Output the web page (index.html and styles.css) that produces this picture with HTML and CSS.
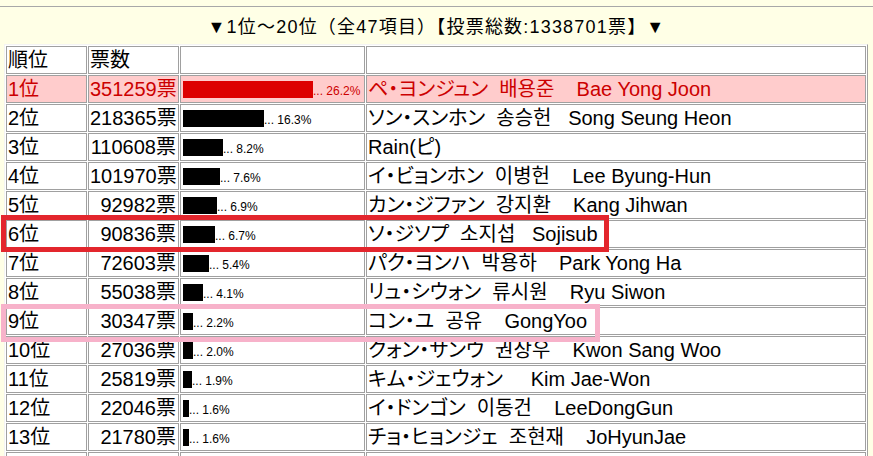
FILE: index.html
```html
<!DOCTYPE html>
<html lang="ja">
<head>
    <meta charset="UTF-8">
    <title>ランキング</title>
    <link rel="stylesheet" href="styles.css">
</head>
<body>
    <div class="topline"></div>
    <div class="title">▼1位〜20位（全47項目）【投票総数:1338701票】▼</div>
    <table class="ranking">
        <tr class="head">
            <td class="c-rank">順位</td>
            <td class="c-votes">票数</td>
            <td class="c-bar"></td>
            <td></td>
        </tr>
        <tr class="first">
            <td>1位</td>
            <td class="num">351259票</td>
            <td><span class="bar" style="width:130px"></span><span class="pct">... 26.2%</span></td>
            <td>ペ・ヨンジュン&nbsp; 배용준&nbsp;&nbsp;&nbsp; Bae Yong Joon</td>
        </tr>
        <tr>
            <td>2位</td>
            <td class="num">218365票</td>
            <td><span class="bar" style="width:81px"></span><span class="pct">... 16.3%</span></td>
            <td>ソン・スンホン&nbsp; 송승헌&nbsp;&nbsp; Song Seung Heon</td>
        </tr>
        <tr>
            <td>3位</td>
            <td class="num">110608票</td>
            <td><span class="bar" style="width:40px"></span><span class="pct">... 8.2%</span></td>
            <td>Rain(ピ)</td>
        </tr>
        <tr>
            <td>4位</td>
            <td class="num">101970票</td>
            <td><span class="bar" style="width:37px"></span><span class="pct">... 7.6%</span></td>
            <td>イ・ビョンホン&nbsp; 이병헌&nbsp;&nbsp;&nbsp; Lee Byung-Hun</td>
        </tr>
        <tr>
            <td>5位</td>
            <td class="num">92982票</td>
            <td><span class="bar" style="width:34px"></span><span class="pct">... 6.9%</span></td>
            <td>カン・ジファン&nbsp; 강지환&nbsp;&nbsp;&nbsp; Kang Jihwan</td>
        </tr>
        <tr>
            <td>6位</td>
            <td class="num">90836票</td>
            <td><span class="bar" style="width:32px"></span><span class="pct">... 6.7%</span></td>
            <td>ソ・ジソプ&nbsp; 소지섭&nbsp;&nbsp; Sojisub</td>
        </tr>
        <tr>
            <td>7位</td>
            <td class="num">72603票</td>
            <td><span class="bar" style="width:26px"></span><span class="pct">... 5.4%</span></td>
            <td>パク・ヨンハ&nbsp; 박용하&nbsp;&nbsp;&nbsp; Park Yong Ha</td>
        </tr>
        <tr>
            <td>8位</td>
            <td class="num">55038票</td>
            <td><span class="bar" style="width:20px"></span><span class="pct">... 4.1%</span></td>
            <td>リュ・シウォン&nbsp; 류시원&nbsp;&nbsp;&nbsp; Ryu Siwon</td>
        </tr>
        <tr>
            <td>9位</td>
            <td class="num">30347票</td>
            <td><span class="bar" style="width:10px"></span><span class="pct">... 2.2%</span></td>
            <td>コン・ユ&nbsp; 공유&nbsp;&nbsp;&nbsp; GongYoo</td>
        </tr>
        <tr>
            <td>10位</td>
            <td class="num">27036票</td>
            <td><span class="bar" style="width:10px"></span><span class="pct">... 2.0%</span></td>
            <td>クォン・サンウ&nbsp; 권상우&nbsp;&nbsp;&nbsp; Kwon Sang Woo</td>
        </tr>
        <tr>
            <td>11位</td>
            <td class="num">25819票</td>
            <td><span class="bar" style="width:9px"></span><span class="pct">... 1.9%</span></td>
            <td>キム・ジェウォン&nbsp;&nbsp;&nbsp;&nbsp; Kim Jae-Won</td>
        </tr>
        <tr>
            <td>12位</td>
            <td class="num">22046票</td>
            <td><span class="bar" style="width:6px"></span><span class="pct">... 1.6%</span></td>
            <td>イ・ドンゴン&nbsp; 이동건&nbsp;&nbsp;&nbsp; LeeDongGun</td>
        </tr>
        <tr>
            <td>13位</td>
            <td class="num">21780票</td>
            <td><span class="bar" style="width:6px"></span><span class="pct">... 1.6%</span></td>
            <td>チョ・ヒョンジェ&nbsp; 조현재&nbsp;&nbsp;&nbsp; JoHyunJae</td>
        </tr>
        <tr class="cut">
            <td></td>
            <td></td>
            <td></td>
            <td></td>
        </tr>
    </table>
    <div class="mark mark-red"></div>
    <div class="mark mark-pink"></div>
</body>
</html>
```

FILE: styles.css
```css
*{
    box-sizing: border-box;
}

body{
    margin: 0;
    position: relative;
    background-color: #ffffe6;
    color: #000;
    font-family: "Liberation Sans", "Noto Sans CJK JP", sans-serif;
    font-feature-settings: "palt";
    overflow: hidden;
    height: 456px;
}

.topline{
    height: 7px;
    border-bottom: 1px solid #a8a8a8;
}

.title{
    margin: 10px 0 7px;
    font-size: 18px;
    line-height: 20px;
    letter-spacing: 1.2px;
    text-align: center;
    font-feature-settings: normal;
}

.ranking{
    margin-left: 4px;
    width: 864px;
    table-layout: fixed;
    border: 1px solid;
    border-color: #f4f4f4 #a0a0a0 #a0a0a0 #f4f4f4;
    border-spacing: 1px;
    background-color: #fff;
    font-size: 20px;
}

.ranking td{
    height: 28px;
    padding: 0 2px 0 1px;
    border: 1px solid #a0a0a0;
    line-height: 20px;
    white-space: nowrap;
    overflow: hidden;
}

.c-rank{ width: 81px; }
.c-votes{ width: 91px; }
.c-bar{ width: 185px; }

.ranking td.num{
    text-align: right;
}

.ranking td:nth-child(3){
    padding-left: 2px;
}

.bar{
    display: inline-block;
    height: 17px;
    vertical-align: -3px;
    background-color: #000;
}

.pct{
    font-size: 12px;
}

.first td{
    background-color: #ffcccc;
    color: #cc0000;
}

.first .bar{
    background-color: #dd0000;
}

.mark{
    position: absolute;
    left: 1px;
    border: 5px solid;
}

.mark-red{
    top: 215px;
    width: 608px;
    height: 37px;
    border-color: #e3262d;
}

.mark-pink{
    top: 304px;
    width: 599px;
    height: 38px;
    border-color: #f7b2ca;
}
```
